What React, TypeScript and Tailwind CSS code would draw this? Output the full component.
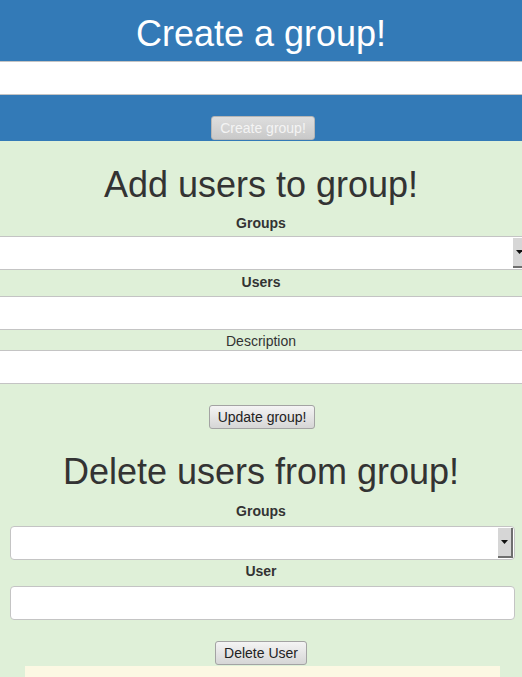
const font = { fontFamily: '"Liberation Sans", Arial, sans-serif' };

const Btn = ({ label, light }: { label: string; light?: boolean }) => (
  <button
    className={`h-[24px] px-[8px] border rounded-[3px] text-[14px] leading-none bg-gradient-to-b ${
      light
        ? "border-[#b5b5b5] from-[#dedede] to-[#c9c9c9] text-[#f4f4f4]"
        : "border-[#a3a3a3] from-[#f4f4f4] to-[#d6d6d6] text-[#222]"
    }`}
  >
    {label}
  </button>
);

const Arrow = () => (
  <div className="w-[15px] self-stretch my-[1px] mr-[1px] bg-[#d6d6d6] border-r-2 border-b-2 border-[#6f6f6f] flex items-center justify-center">
    <svg width="7" height="4" viewBox="0 0 7 4">
      <path d="M0 0h7L3.5 4z" fill="#111" />
    </svg>
  </div>
);

const Label = ({ text, bold = true, h = 20 }: { text: string; bold?: boolean; h?: number }) => (
  <div
    className={`text-center text-[14px] text-[#333] ${bold ? "font-bold" : ""} ${
      h === 18 ? "h-[18px] leading-[18px]" : "h-[20px] leading-[20px]"
    }`}
  >
    {text}
  </div>
);

export default function App() {
  return (
    <div className="w-[522px] h-[677px] overflow-hidden bg-white" style={font}>
      {/* create */}
      <section className="bg-[#337ab7] pt-[14px] h-[141px]">
        <h1 className="text-[36px] leading-[40px] h-[40px] text-white text-center">Create a group!</h1>
        <div className="mt-[7px] h-[34px] bg-white border-y border-[#c4c4c4]" />
        <div className="mt-[21px] flex justify-center pl-[4px]">
          <Btn label="Create group!" light />
        </div>
      </section>

      {/* add */}
      <section className="bg-[#dff0d8] pt-[24px]">
        <h2 className="text-[36px] leading-[40px] h-[40px] text-[#333] text-center">Add users to group!</h2>
        <div className="mt-[8px]">
          <Label text="Groups" />
        </div>
        <div className="mt-[3px] w-[535px] h-[34px] bg-white border-y border-[#c4c4c4] flex justify-end pr-[6px]">
          <Arrow />
        </div>
        <div className="mt-[2px]">
          <Label text="Users" />
        </div>
        <div className="mt-[4px] h-[34px] bg-white border-y border-[#c4c4c4]" />
        <div className="mt-[2px]">
          <Label text="Description" bold={false} h={18} />
        </div>
        <div className="h-[34px] bg-white border-y border-[#c4c4c4]" />
        <div className="mt-[21px] flex justify-center pl-[2px]">
          <Btn label="Update group!" />
        </div>

        {/* delete */}
        <h2 className="mt-[23px] text-[36px] leading-[40px] h-[40px] text-[#333] text-center">
          Delete users from group!
        </h2>
        <div className="mt-[9px]">
          <Label text="Groups" />
        </div>
        <div className="mt-[5px] ml-[10px] w-[505px] h-[34px] bg-white border border-[#c4c4c4] rounded-[4px] flex justify-end">
          <Arrow />
        </div>
        <div className="mt-[1px]">
          <Label text="User" />
        </div>
        <div className="mt-[5px] ml-[10px] w-[505px] h-[34px] bg-white border border-[#c4c4c4] rounded-[4px]" />
        <div className="mt-[21px] flex justify-center">
          <Btn label="Delete User" />
        </div>
        <div className="mt-[1px] ml-[25px] w-[475px] h-[40px] bg-[#fcf8e3]" />
      </section>
    </div>
  );
}
